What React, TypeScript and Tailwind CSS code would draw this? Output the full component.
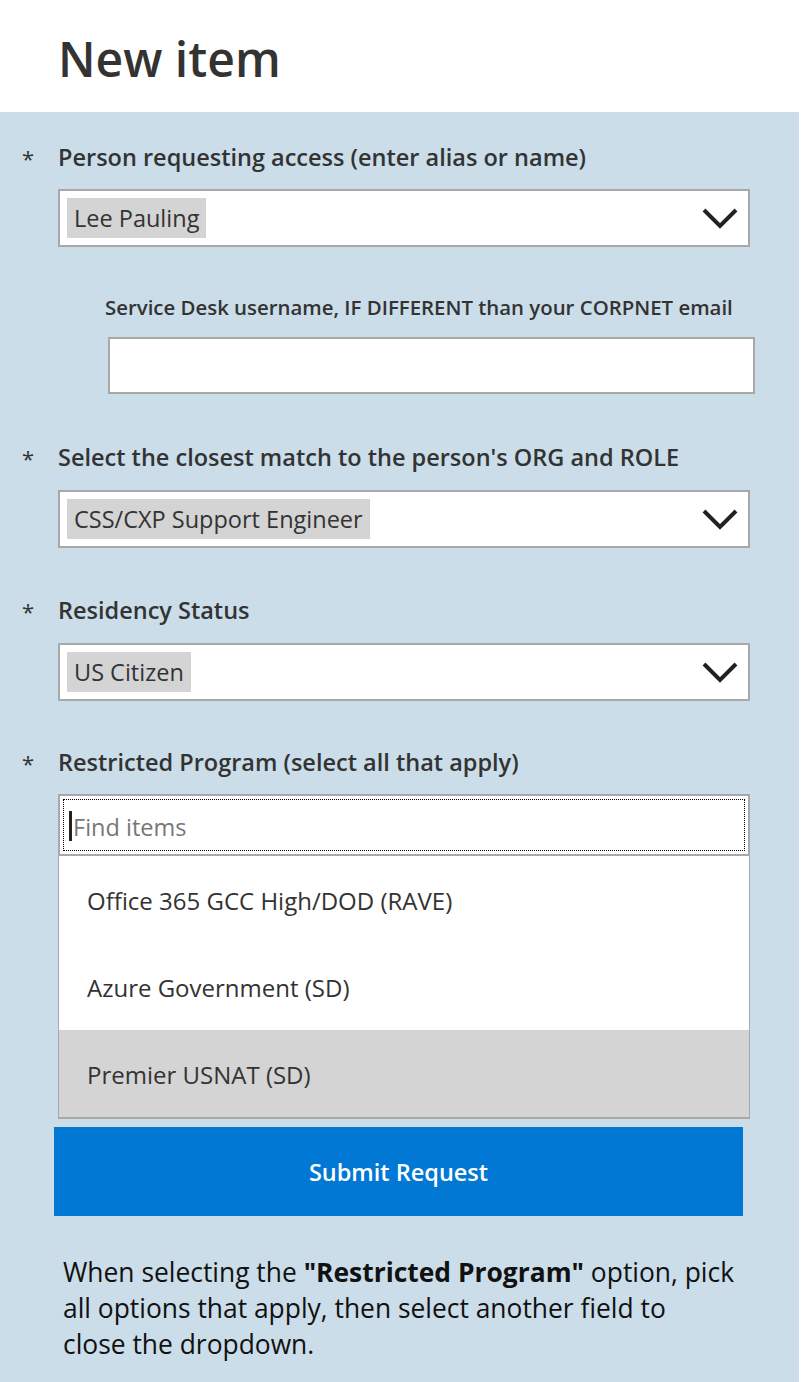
import React from "react";

const font = { fontFamily: '"Open Sans", "Noto Sans", sans-serif' };

function Chevron() {
  return (
    <svg width="36" height="22" viewBox="0 0 36 22" className="shrink-0">
      <path d="M2 3 L18 19 L34 3" fill="none" stroke="#222" strokeWidth="4" />
    </svg>
  );
}

function Label({ text, star = true }: { text: string; star?: boolean }) {
  return (
    <div className="flex items-center h-[30px] pt-[2px] text-[23.5px] font-semibold text-[#333]">
      <span className="w-[58px] pl-[22px] font-normal text-[22px]">{star ? "*" : ""}</span>
      <span>{text}</span>
    </div>
  );
}

function Select({ value }: { value: string }) {
  return (
    <div className="ml-[58px] w-[692px] h-[58px] bg-white border-2 border-[#a8a8a8] flex items-center justify-between pl-[7px] pr-[10px]">
      <span className="bg-[#d4d4d4] h-[40px] px-[7px] pt-[2px] flex items-center text-[23.5px] text-[#333]">
        {value}
      </span>
      <Chevron />
    </div>
  );
}

export default function App() {
  return (
    <div className="w-[812px] min-h-[1382px] bg-white" style={font}>
      <header className="h-[112px] pl-[58px] flex items-center">
        <h1 className="text-[48px] font-semibold text-[#333] leading-none mt-[6px]">New item</h1>
      </header>
      <main className="w-[799px] bg-[#cadde9] pt-[30px] pb-[30px]">
        <Label text="Person requesting access (enter alias or name)" />
        <div className="mt-[17px]">
          <Select value="Lee Pauling" />
        </div>

        <div className="mt-[45px] pl-[105px] h-[30px] flex items-center text-[20.4px] font-semibold text-[#333]">
          Service Desk username, IF DIFFERENT than your CORPNET email
        </div>
        <div className="mt-[15px] ml-[108px] w-[647px] h-[57px] bg-white border-2 border-[#a8a8a8]" />

        <div className="mt-[48px]">
          <Label text="Select the closest match to the person's ORG and ROLE" />
        </div>
        <div className="mt-[18px]">
          <Select value="CSS/CXP Support Engineer" />
        </div>

        <div className="mt-[47px]">
          <Label text="Residency Status" />
        </div>
        <div className="mt-[18px]">
          <Select value="US Citizen" />
        </div>

        <div className="mt-[46px]">
          <Label text="Restricted Program (select all that apply)" />
        </div>
        <div className="mt-[17px] ml-[58px] w-[692px]">
          <div className="h-[62px] bg-white border-2 border-[#a8a8a8] p-[3px]">
            <div className="h-full border border-dotted border-black flex items-center pl-[5px] text-[23.5px] text-[#777]">
              <span className="w-[3px] h-[30px] bg-[#222] mr-[1px] mt-[2px]" />
              <span className="pt-[5px]">Find items</span>
            </div>
          </div>
          <div className="bg-white border-x border-b-2 border-[#a8a8a8] text-[24px] text-[#333]">
            {["Office 365 GCC High/DOD (RAVE)", "Azure Government (SD)", "Premier USNAT (SD)"].map((item, i) => (
              <div
                key={item}
                className={`h-[87px] flex items-center pl-[28px] pt-[3px] ${i === 2 ? "bg-[#d4d4d4]" : ""}`}
              >
                {item}
              </div>
            ))}
          </div>
        </div>

        <button className="mt-[8px] ml-[54px] w-[689px] h-[89px] pt-[3px] bg-[#0078d4] text-white text-[23.5px] font-semibold">
          Submit Request
        </button>

        <p className="mt-[38px] pl-[63px] text-[26.4px] leading-[36px] text-[#111]">
          When selecting the <b>"Restricted Program"</b> option, pick
          <br />
          all options that apply, then select another field to
          <br />
          close the dropdown.
        </p>
      </main>
    </div>
  );
}
